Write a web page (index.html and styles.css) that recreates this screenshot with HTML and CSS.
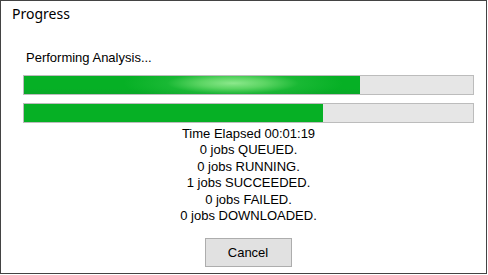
FILE: index.html
```html
<!DOCTYPE html>
<html>
<head>
<meta charset="utf-8">
<link rel="stylesheet" href="styles.css">
</head>
<body>
<div class="window">
  <div class="titlebar">Progress</div>
  <div class="content">
    <div class="label">Performing Analysis...</div>
    <div class="bar"><div class="fill fill-glow" style="width:336px"></div></div>
    <div class="bar bar2"><div class="fill" style="width:299px"></div></div>
    <div class="status">
      <div>Time Elapsed 00:01:19</div>
      <div>0 jobs QUEUED.</div>
      <div>0 jobs RUNNING.</div>
      <div>1 jobs SUCCEEDED.</div>
      <div>0 jobs FAILED.</div>
      <div>0 jobs DOWNLOADED.</div>
    </div>
    <div class="actions"><button class="btn">Cancel</button></div>
  </div>
</div>
</body>
</html>
```

FILE: styles.css
```css
html, body {
  margin: 0;
  padding: 0;
  background: #ffffff;
}
.window {
  box-sizing: border-box;
  width: 487px;
  height: 274px;
  border: 1px solid #434343;
  background: #ffffff;
  display: flex;
  flex-direction: column;
}
.titlebar {
  height: 30px;
  padding-left: 11px;
  font-family: "Noto Sans", "Open Sans", sans-serif;
  font-size: 14px;
  line-height: 26px;
  color: #000;
}
.content {
  display: flex;
  flex-direction: column;
  padding: 0 12px 0 22px;
  font-family: "Liberation Sans", Arial, sans-serif;
  font-size: 13px;
  color: #000;
}
.label {
  margin-top: 20px;
  padding-left: 3px;
  line-height: 14px;
  height: 14px;
}
.bar {
  box-sizing: border-box;
  margin-top: 10px;
  width: 451px;
  height: 20px;
  border: 1px solid #bcbcbc;
  background: #e6e6e6;
  display: flex;
}
.bar2 {
  margin-top: 8px;
}
.fill {
  height: 100%;
  background: #06b025;
}
.fill-glow {
  background:
    radial-gradient(ellipse 110px 18px at 209px 40%, rgba(140,232,140,1), rgba(120,225,120,0.75) 30%, rgba(60,200,80,0.35) 60%, rgba(6,176,37,0) 100%),
    linear-gradient(to bottom, #06b025 0%, #06b025 70%, #0aa728 100%);
}
.status {
  width: 451px;
  margin-top: 3px;
  text-align: center;
  line-height: 16.4px;
}
.actions {
  width: 451px;
  display: flex;
  justify-content: center;
  margin-top: 14px;
}
.btn {
  box-sizing: border-box;
  width: 87px;
  height: 29px;
  margin-left: -1px;
  border: 1px solid #adadad;
  background: #e1e1e1;
  font-family: "Liberation Sans", Arial, sans-serif;
  font-size: 13px;
  color: #000;
  padding: 0;
}
```
